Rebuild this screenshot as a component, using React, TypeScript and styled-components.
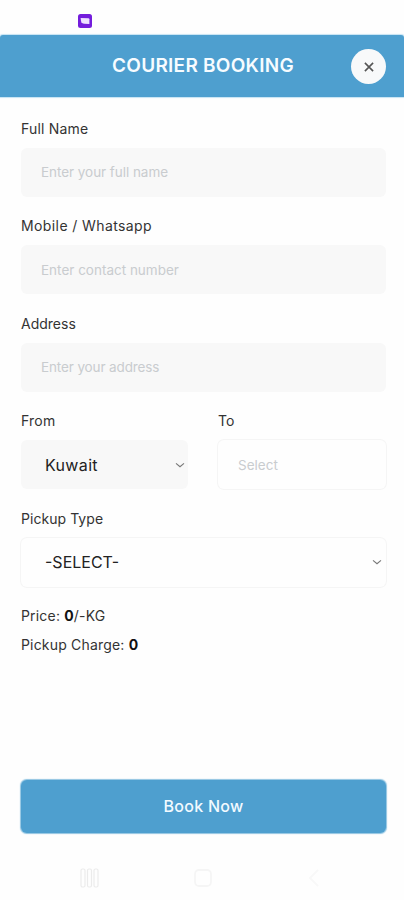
import React from "react";
import styled, { createGlobalStyle } from "styled-components";

const GlobalStyle = createGlobalStyle`
  * { box-sizing: border-box; }
  body { margin: 0; background: #fefefe; }
`;

const Screen = styled.div`
  width: 404px;
  height: 900px;
  display: flex;
  flex-direction: column;
  overflow: hidden;
  background: #fefefe;
  color: #333;
  font-family: Inter, "Liberation Sans", sans-serif;
`;

const StatusBar = styled.div`
  height: 35px;
  flex: none;
  padding: 14px 0 0 78px;
  svg { display: block; }
`;

const Header = styled.header`
  height: 62px;
  flex: none;
  display: grid;
  grid-template-columns: 1fr auto 1fr;
  align-items: center;
  padding: 0 18px 0 20px;
  background: #4e9fcf;
  border-radius: 3px 3px 0 0;
  box-shadow: 0 0 1px 1px #c5e3f3;
`;

const Title = styled.h1`
  grid-column: 2;
  margin: 0;
  color: #f7fcff;
  font-size: 19px;
  font-weight: 600;
  line-height: 24px;
  letter-spacing: 0.26px;
  white-space: nowrap;
`;

const CloseButton = styled.button`
  justify-self: end;
  display: grid;
  place-items: center;
  width: 35px;
  height: 35px;
  margin-top: 1px;
  padding: 0;
  border: 0;
  border-radius: 50%;
  background: #f8f9fa;
`;

const Form = styled.main`
  flex: none;
  height: 683px;
  display: flex;
  flex-direction: column;
  gap: 10.5px;
  padding: 12.7px 18px 0 21px;
`;

const Field = styled.div`
  flex: none;
  display: flex;
  flex-direction: column;
`;

const Pair = styled.div`
  flex: none;
  display: grid;
  grid-template-columns: 167px 168px;
  justify-content: space-between;
`;

const Label = styled.span<{ $spacing?: number }>`
  height: 38px;
  line-height: 38px;
  font-size: 14px;
  letter-spacing: ${(p) => p.$spacing ?? 0}px;
  white-space: nowrap;
`;

const Control = styled.div<{ $outlined?: boolean; $select?: boolean }>`
  height: 49px;
  display: flex;
  align-items: center;
  justify-content: space-between;
  padding: 0 ${(p) => (p.$outlined ? 4 : 3)}px 0 ${(p) => (p.$select ? 24 : 20)}px;
  border-radius: 6px;
  background: ${(p) => (p.$outlined ? "#fefefe" : "#f8f8f8")};
  box-shadow: ${(p) => (p.$outlined ? "0 0 0 1px #f5f5f5" : "none")};
`;

const Placeholder = styled.span<{ $spacing?: number }>`
  color: #c9cccf;
  font-size: 13.5px;
  line-height: 21px;
  padding-top: 1px;
  letter-spacing: ${(p) => p.$spacing ?? 0}px;
  white-space: nowrap;
`;

const Value = styled.span<{ $spacing?: number }>`
  color: #222;
  font-size: 16px;
  line-height: 22px;
  letter-spacing: ${(p) => p.$spacing ?? 0}px;
  white-space: nowrap;
`;

const Summary = styled.div`
  display: flex;
  flex-direction: column;
  padding-top: 5px;
`;

const SummaryLine = styled.p`
  margin: 0;
  height: 28.5px;
  line-height: 28px;
  font-size: 14px;
  letter-spacing: 0.18px;
  b { color: #111; font-weight: 700; }
`;

const BookButton = styled.button`
  flex: none;
  height: 53px;
  margin: 0 18px 0 21px;
  padding: 0 0 2px;
  border: 0;
  border-radius: 6px;
  background: #4e9fcf;
  box-shadow: 0 0 1px 0.5px #8fc4e2;
  color: #f2faff;
  font-family: inherit;
  font-size: 16px;
  font-weight: 500;
  letter-spacing: 0.25px;
`;

const NavBar = styled.nav`
  flex: 1;
  display: flex;
  justify-content: space-between;
  align-items: center;
  padding: 23px 79px 0 79px;
`;

const Chevron = () => (
  <svg width="10" height="8" viewBox="0 0 10 8" fill="none" stroke="#777" strokeWidth="1.1">
    <path d="M1 2.3 5 5.7 9 2.3" />
  </svg>
);

const AppBadge = () => (
  <svg width="14" height="14" viewBox="0 0 14 14">
    <rect width="14" height="14" rx="2.5" fill="#741ddc" />
    <path d="M2.6 4 10.4 4.2q1 .1 1 1v4.8l-5-.2Q3.4 9.6 3 7Z" fill="#eee1ff" />
  </svg>
);

export default function App() {
  return (
    <Screen>
      <GlobalStyle />
      <StatusBar><AppBadge /></StatusBar>
      <Header>
        <Title>COURIER BOOKING</Title>
        <CloseButton aria-label="Close">
          <svg width="12" height="12" viewBox="0 0 12 12" stroke="#555" strokeWidth="1.6">
            <path d="m1.9 1.9 8.2 8.2m0-8.2-8.2 8.2" />
          </svg>
        </CloseButton>
      </Header>
      <Form>
        <Field>
          <Label $spacing={0.18}>Full Name</Label>
          <Control><Placeholder $spacing={-0.05}>Enter your full name</Placeholder></Control>
        </Field>
        <Field>
          <Label $spacing={0.4}>Mobile / Whatsapp</Label>
          <Control><Placeholder>Enter contact number</Placeholder></Control>
        </Field>
        <Field>
          <Label>Address</Label>
          <Control><Placeholder $spacing={-0.12}>Enter your address</Placeholder></Control>
        </Field>
        <Pair>
          <Field>
            <Label $spacing={0.2}>From</Label>
            <Control $select><Value $spacing={0.35}>Kuwait</Value><Chevron /></Control>
          </Field>
          <Field>
            <Label>To</Label>
            <Control $outlined><Placeholder>Select</Placeholder></Control>
          </Field>
        </Pair>
        <Field>
          <Label $spacing={0.05}>Pickup Type</Label>
          <Control $outlined $select><Value>-SELECT-</Value><Chevron /></Control>
        </Field>
        <Summary>
          <SummaryLine>Price: <b>0</b>/-KG</SummaryLine>
          <SummaryLine>Pickup Charge: <b>0</b></SummaryLine>
        </Summary>
      </Form>
      <BookButton>Book Now</BookButton>
      <NavBar>
        <svg width="21" height="22" viewBox="0 0 21 22" fill="none" stroke="#ebebeb" strokeWidth="1.2">
          <rect x="2" y="2" width="4" height="18" rx="1.5" />
          <rect x="8.5" y="2" width="4" height="18" rx="1.5" />
          <rect x="15" y="2" width="4" height="18" rx="1.5" />
        </svg>
        <svg width="20" height="20" viewBox="0 0 20 20" fill="none" stroke="#f5f5f5" strokeWidth="1.8">
          <rect x="2" y="2" width="16" height="16" rx="4" />
        </svg>
        <svg width="20" height="20" viewBox="0 0 20 20" fill="none" stroke="#f8f8f8" strokeWidth="2">
          <path d="m13 2-8 8 8 8" />
        </svg>
      </NavBar>
    </Screen>
  );
}
